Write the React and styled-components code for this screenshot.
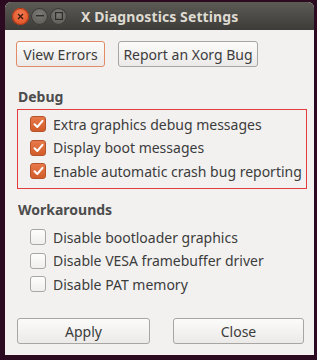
import React from "react";
import styled, { createGlobalStyle } from "styled-components";

const Global = createGlobalStyle`
  html, body { margin: 0; padding: 0; background: #2c0b20; }
  body { font-family: "Noto Sans", "DejaVu Sans", sans-serif; }
`;

const Desktop = styled.div`
  width: 317px;
  height: 360px;
  box-sizing: border-box;
  padding: 2px 3px 5px 5px;
  background: #2c0b20;
  display: flex;
`;

const Window = styled.div`
  flex: 1;
  display: flex;
  flex-direction: column;
  border-radius: 6px 6px 0 0;
  overflow: hidden;
  background: #f2f1f0;
`;

const TitleBar = styled.div`
  height: 28px;
  display: flex;
  align-items: center;
  padding-left: 7px;
  background: linear-gradient(#5b5a55, #3d3c38);
  color: #dfdbd2;
`;

const WinBtn = styled.span`
  width: 17px;
  height: 17px;
  border-radius: 50%;
  margin-right: 2px;
  display: flex;
  align-items: center;
  justify-content: center;
  background: ${(p) =>
    p.$close
      ? "radial-gradient(circle at 50% 35%, #f47a4f, #d84a1c)"
      : "radial-gradient(circle at 50% 35%, #7b7a74, #56554f)"};
  box-shadow: inset 0 0 0 1px ${(p) => (p.$close ? "#a8381a" : "#3a3935")};
`;

const Title = styled.span`
  font-weight: bold;
  font-size: 14px;
  margin-left: 12px;
  letter-spacing: 0.1px;
`;

const Content = styled.div`
  flex: 1;
  display: flex;
  flex-direction: column;
  padding: 11px 11px 0 11px;
  color: #3c3c3c;
  font-size: 14px;
`;

const ButtonRow = styled.div`
  display: flex;
  gap: 13px;
`;

const Button = styled.button`
  font-family: inherit;
  font-size: 14px;
  color: #3c3c3c;
  height: 26px;
  padding: 0 4px;
  border-radius: 3px;
  border: 1px solid ${(p) => (p.$focus ? "#e08a68" : "#a8a6a2")};
  background: linear-gradient(#fbfbfa, #eceae8);
  width: ${(p) => p.$w}px;
  display: flex;
  align-items: center;
  justify-content: center;
  white-space: nowrap;
`;

const Heading = styled.div`
  font-weight: bold;
  font-size: 14px;
  color: #4c4c4c;
  margin: ${(p) => p.$mt}px 0 0 2px;
  height: 17px;
  line-height: 17px;
`;

const Group = styled.div`
  margin-top: 4px;
  display: flex;
  flex-direction: column;
  gap: 7.5px;
  padding: 6px 0 9px 12px;
  width: 290px;
  box-sizing: border-box;
  border: 1px solid ${(p) => (p.$outline ? "#e23c3c" : "transparent")};
  margin-left: 1px;
`;

const Row = styled.label`
  display: flex;
  align-items: center;
  gap: 7px;
  height: 16px;
  white-space: nowrap;
`;

const Box = styled.span`
  width: 14px;
  height: 14px;
  border-radius: 3px;
  display: flex;
  align-items: center;
  justify-content: center;
  flex-shrink: 0;
  border: 1px solid ${(p) => (p.$on ? "#b4532a" : "#a9a7a3")};
  background: ${(p) =>
    p.$on ? "linear-gradient(#e8794a, #d25c2a)" : "linear-gradient(#fdfdfd, #f0efed)"};
`;

const Spacer = styled.div`
  flex: 1;
`;

const Footer = styled.div`
  display: flex;
  justify-content: space-between;
  padding: 0 1px 11px 1px;
  width: 287px;
`;

const Check = ({ on, children }) => (
  <Row>
    <Box $on={on}>
      {on && (
        <svg width="11" height="10" viewBox="0 0 11 10">
          <path d="M1.5 5.2 L4.3 8 L9.5 1.8" fill="none" stroke="#fff" strokeWidth="2" strokeLinecap="round" strokeLinejoin="round" />
        </svg>
      )}
    </Box>
    <span>{children}</span>
  </Row>
);

export default function App() {
  return (
    <>
      <Global />
      <Desktop>
        <Window>
          <TitleBar>
            <WinBtn $close>
              <svg width="7" height="7" viewBox="0 0 7 7">
                <path d="M1 1 L6 6 M6 1 L1 6" stroke="#3a1a10" strokeWidth="1.3" />
              </svg>
            </WinBtn>
            <WinBtn>
              <svg width="8" height="2" viewBox="0 0 8 2">
                <rect width="8" height="1.4" fill="#2e2d2a" />
              </svg>
            </WinBtn>
            <WinBtn>
              <svg width="8" height="8" viewBox="0 0 8 8">
                <rect x="0.6" y="0.6" width="6.8" height="6.8" fill="none" stroke="#2e2d2a" strokeWidth="1.2" />
              </svg>
            </WinBtn>
            <Title>X Diagnostics Settings</Title>
          </TitleBar>
          <Content>
            <ButtonRow>
              <Button $focus $w={89}>View Errors</Button>
              <Button $w={140}>Report an Xorg Bug</Button>
            </ButtonRow>
            <Heading $mt={21}>Debug</Heading>
            <Group $outline>
              <Check on>Extra graphics debug messages</Check>
              <Check on>Display boot messages</Check>
              <Check on>Enable automatic crash bug reporting</Check>
            </Group>
            <Heading $mt={12}>Workarounds</Heading>
            <Group>
              <Check>Disable bootloader graphics</Check>
              <Check>Disable VESA framebuffer driver</Check>
              <Check>Disable PAT memory</Check>
            </Group>
            <Spacer />
            <Footer>
              <Button $w={133}>Apply</Button>
              <Button $w={131}>Close</Button>
            </Footer>
          </Content>
        </Window>
      </Desktop>
    </>
  );
}
